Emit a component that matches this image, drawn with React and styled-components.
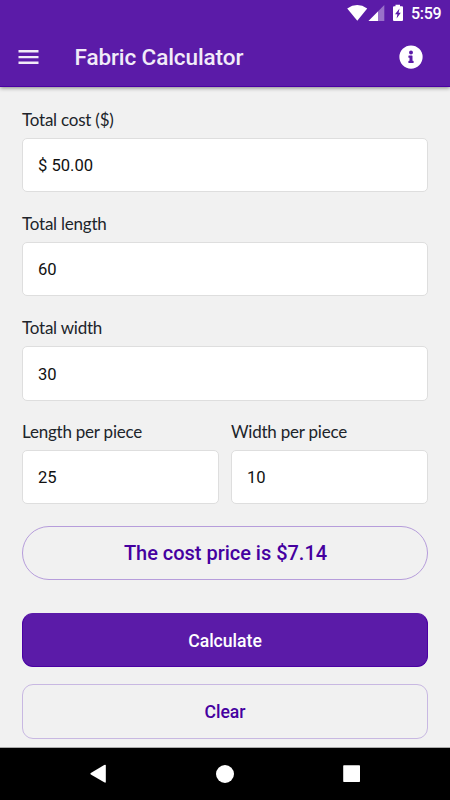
import React from "react";
import styled, { createGlobalStyle } from "styled-components";

const GlobalStyle = createGlobalStyle`
  * { box-sizing: border-box; }
  html, body { margin: 0; background: #f1f1f1; }
  body { overflow: hidden; }
`;

const Screen = styled.div`
  width: 450px;
  height: 800px;
  display: flex;
  flex-direction: column;
  background: #f1f1f1;
  font-family: Roboto, sans-serif;
  overflow: hidden;
`;

const Header = styled.header`
  height: 87px;
  flex: none;
  background: #5b1ba8;
  border-bottom: 1px solid #4a00a3;
  box-shadow: 0 1px 4px rgba(0, 0, 0, 0.45);
  color: #fff;
`;

const StatusBar = styled.div`
  height: 27px;
  display: flex;
  justify-content: flex-end;
  padding-right: 9px;
`;

const StatusIcons = styled.svg`
  width: 64px;
  height: 27px;
  display: block;
`;

const Clock = styled.time`
  width: 30px;
  margin-left: 1px;
  font-size: 16px;
  letter-spacing: -0.3px;
  line-height: 28px;
  font-weight: 500;
  white-space: nowrap;
`;

const AppBar = styled.div`
  height: 59px;
  display: flex;
  align-items: center;
  padding: 0 27px 0 18px;
`;

const IconButton = styled.button`
  display: block;
  flex: none;
  padding: 0;
  border: 0;
  background: none;
  svg { display: block; }
`;

const Title = styled.h1`
  flex: 1;
  margin: 0 0 0 35.5px;
  font-size: 22.5px;
  letter-spacing: -0.1px;
  line-height: 30px;
  font-weight: 500;
  color: #f1ebf8;
`;

const Form = styled.main`
  flex: 1;
  padding: 19px 22px 0;
`;

const Field = styled.label`
  display: block;
  flex: 1;
  min-width: 0;
  height: ${(p) => p.$height || 104}px;
`;

const Label = styled.span`
  display: block;
  height: 32px;
  line-height: 28px;
  font-family: Lato, sans-serif;
  font-size: 17px;
  letter-spacing: -0.22px;
  color: #20242a;
`;

const Input = styled.input`
  display: block;
  width: 100%;
  height: 54px;
  padding: 0 15px;
  border: 1px solid #dedede;
  border-radius: 5px;
  background: #fff;
  font-family: Roboto, sans-serif;
  font-size: 16.6px;
  color: #111;
  outline: none;
`;

const TallInput = styled(Input)`
  height: 55px;
  padding-top: 1px;
`;

const FieldPair = styled.div`
  display: flex;
  gap: 12px;
`;

const Result = styled.output`
  display: flex;
  align-items: center;
  justify-content: center;
  height: 54px;
  margin-top: 22px;
  padding-left: 1px;
  border: 1px solid #b69ddb;
  border-radius: 27px;
  font-size: 20px;
  letter-spacing: -0.02px;
  font-weight: 500;
  color: #4500a0;
`;

const Button = styled.button`
  display: block;
  width: 100%;
  height: ${(p) => (p.$filled ? 54 : 55)}px;
  margin-top: ${(p) => (p.$filled ? 33 : 17)}px;
  padding: ${(p) => (p.$filled ? "2px 0 0" : 0)};
  border: 1px solid ${(p) => (p.$filled ? "#4a00a3" : "#c8b8e2")};
  border-top-color: ${(p) => (p.$filled ? "#5b1ba8" : "#c8b8e2")};
  border-radius: 11px;
  background: ${(p) => (p.$filled ? "#5b1ba8" : "transparent")};
  color: ${(p) => (p.$filled ? "#fff" : "#4500a0")};
  font-family: Roboto, sans-serif;
  font-size: 17.6px;
  font-weight: 500;
`;

const NavBar = styled.nav`
  height: 53px;
  flex: none;
  display: flex;
  background: #000;
  border-top: 1px solid #aaa;
  svg { display: block; }
`;

function StatusGlyphs() {
  return (
    <StatusIcons viewBox="346 0 64 27" fill="#fff">
      <path d="M347.200 8.400Q357.300 1.600 367.200 8.400L357.300 20.700Z" />
      <path d="M384.300 5V21H368.500Z" opacity=".38" />
      <path d="M378 11.400V21H368.500Z" />
      <path
        fillRule="evenodd"
        d="M395.500 4.800h4.500v1.500h2q1 0 1 1V20q0 1-1 1h-8q-1 0-1-1V7.300q0-1 1-1h1.500ZM399.500 8.600l-4.500 5.700h2.400l-.8 4.300l4.200-5.900h-2.200Z"
      />
    </StatusIcons>
  );
}

export default function App() {
  return (
    <Screen>
      <GlobalStyle />
      <Header>
        <StatusBar>
          <StatusGlyphs />
          <Clock>5:59</Clock>
        </StatusBar>
        <AppBar>
          <IconButton aria-label="Menu">
            <svg width="21" height="16" viewBox="0 0 21 16" fill="#f1ebf8">
              <path d="M.5 1.100h20v2.400H.5zM.5 6.900h20v2.400H.5zM.5 12.500h20v2.400H.5z" />
            </svg>
          </IconButton>
          <Title>Fabric Calculator</Title>
          <IconButton aria-label="Information">
            <svg width="24" height="24" viewBox="0 0 512 512" fill="#fff">
              <path
                fillRule="evenodd"
                d="M256 8a248 248 0 1 0 0 496a248 248 0 1 0 0-496Zm0 110a42 42 0 1 1 0 84a42 42 0 1 1 0-84Zm56 254c0 7-5 12-12 12h-88c-7 0-12-5-12-12v-24c0-7 5-12 12-12h12v-64h-12c-7 0-12-5-12-12v-24c0-7 5-12 12-12h64c7 0 12 5 12 12v100h12c7 0 12 5 12 12Z"
              />
            </svg>
          </IconButton>
        </AppBar>
      </Header>
      <Form>
        <Field><Label>Total cost ($)</Label><Input defaultValue="$ 50.00" /></Field>
        <Field><Label>Total length</Label><Input defaultValue="60" /></Field>
        <Field><Label>Total width</Label><TallInput defaultValue="30" /></Field>
        <FieldPair>
          <Field $height={86}><Label>Length per piece</Label><Input defaultValue="25" /></Field>
          <Field $height={86}><Label>Width per piece</Label><Input defaultValue="10" /></Field>
        </FieldPair>
        <Result>The cost price is $7.14</Result>
        <Button $filled>Calculate</Button>
        <Button>Clear</Button>
      </Form>
      <NavBar>
        <svg width="450" height="52" viewBox="0 748 450 52" fill="#fff">
          <path d="M90.800 773.100L104.200 765Q105.800 764.100 105.800 765.600V781.700Q105.800 783.200 104.200 782.300L90.800 774.500Q89.800 773.800 90.800 773.100Z" />
          <circle cx="225" cy="774" r="9" />
          <rect x="343.200" y="765.200" width="16.800" height="16.800" rx=".7" />
        </svg>
      </NavBar>
    </Screen>
  );
}
